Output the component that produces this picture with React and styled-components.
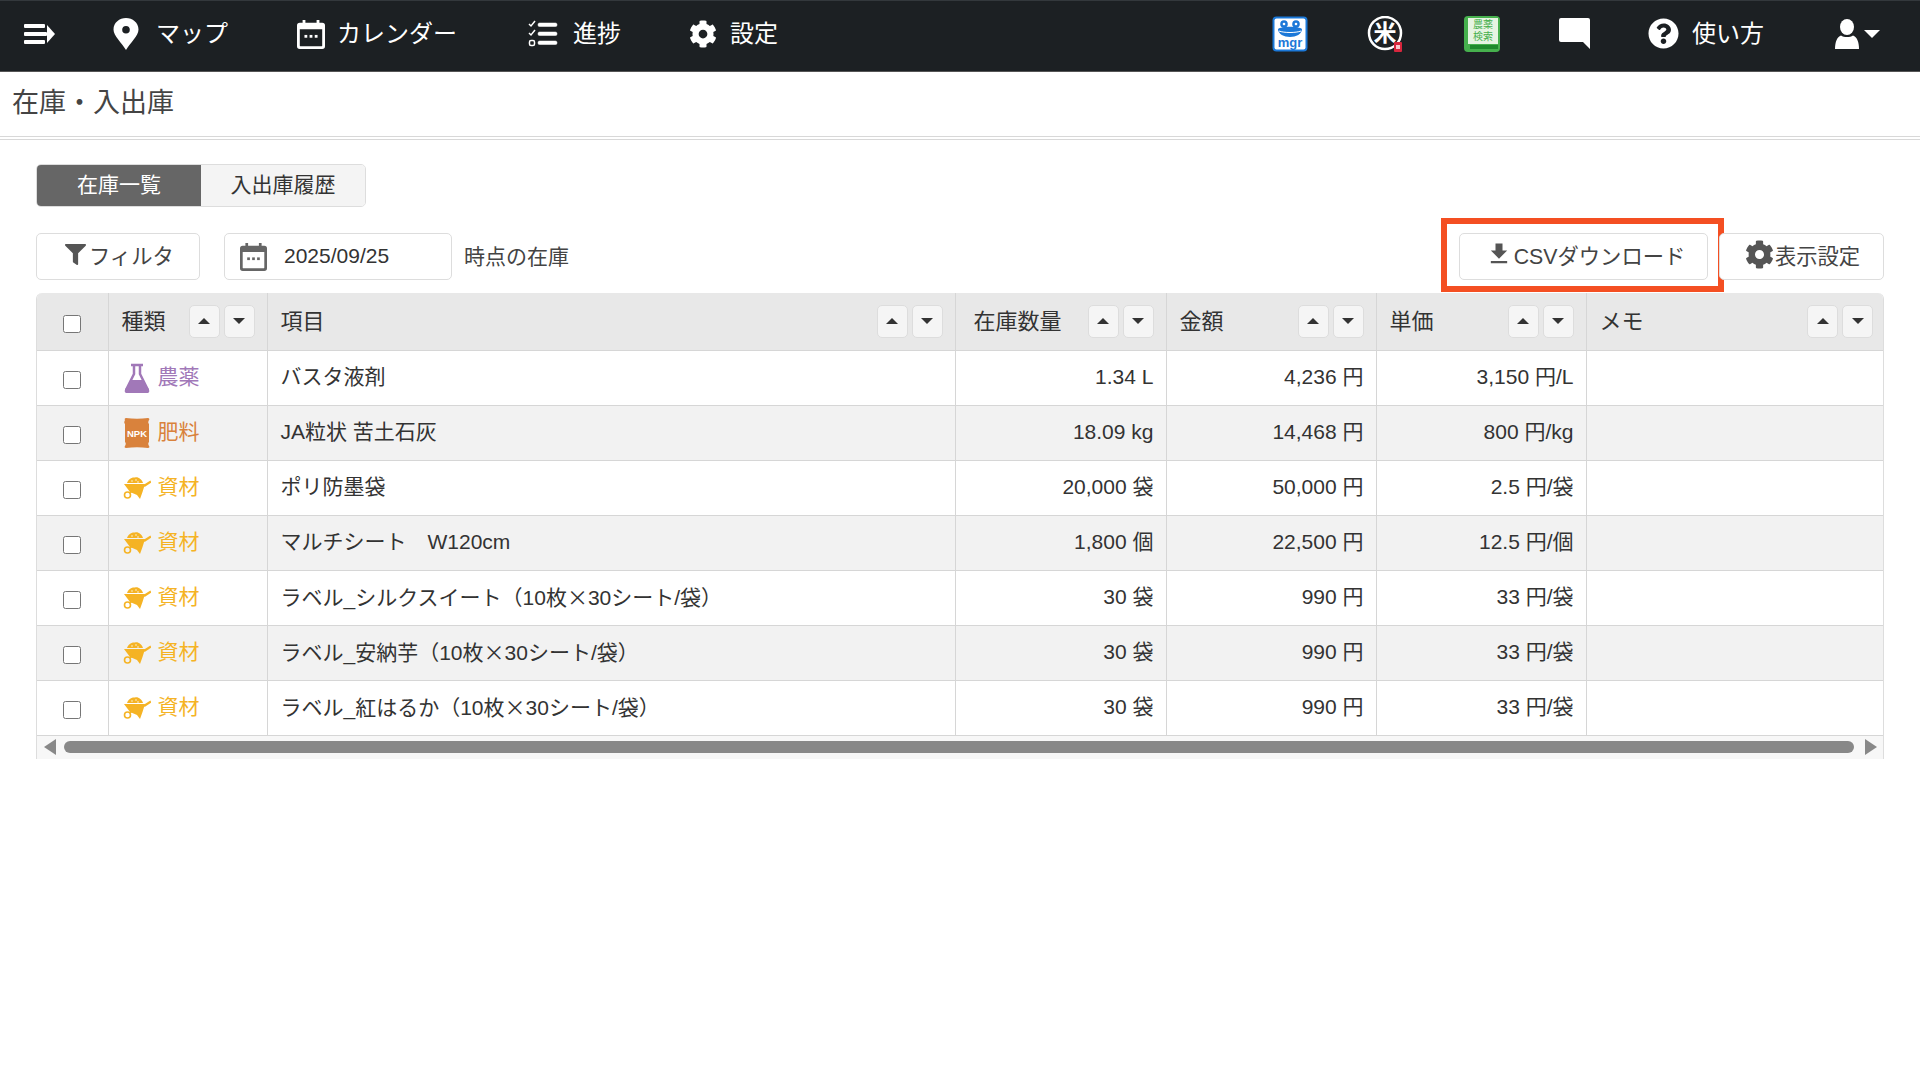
import React from 'react'
import styled, { createGlobalStyle } from 'styled-components'
import { FaCog, FaQuestionCircle, FaFilter } from 'react-icons/fa'
import { MdFileDownload } from 'react-icons/md'

const GlobalStyle = createGlobalStyle`
  html, body { margin: 0; padding: 0; background: #fff; }
  body {
    font-family: "Liberation Sans", "Noto Sans CJK JP", sans-serif;
    font-size: 21px;
    color: #333;
  }
`

const Nav = styled.header`
  height: 72px;
  box-sizing: border-box;
  background: #1c2023;
  border-top: 1px solid #33383c;
  border-bottom: 1px solid #555;
  padding: 0 40px 5px 22px;
  display: flex;
  align-items: center;
  color: #fff;
`
const MenuButton = styled.div`
  display: flex;
  margin-right: 55px;
`
const NavItem = styled.div`
  display: flex;
  align-items: center;
  gap: ${(p) => p.$gap || 13}px;
  margin-right: ${(p) => p.$after || 69}px;
  font-size: 24px;
  line-height: 1;
  white-space: nowrap;
  svg { flex: none; }
`
const NavRight = styled.div`
  margin-left: auto;
  display: flex;
  align-items: center;
  gap: 59px;
`
const NavHelp = styled(NavItem)`
  margin-left: -1px;
  margin-right: 12px;
`
const UserMenu = styled.div`
  display: flex;
  align-items: center;
  gap: 5px;
`
const Caret = styled.span`
  width: 0;
  height: 0;
  border-left: 8px solid transparent;
  border-right: 8px solid transparent;
  border-top: 8px solid #fff;
`

const TitleBar = styled.div`
  height: 68px;
  box-sizing: border-box;
  border-bottom: 4px double #d8d8d8;
  padding: 11px 12px 0;
  font-size: 27px;
  line-height: 40px;
  color: #444;
`

const Main = styled.main`
  padding: 24px 36px 0;
`
const Tabs = styled.div`
  display: inline-flex;
  vertical-align: top;
  height: 43px;
  box-sizing: border-box;
  border-radius: 5px;
  border: 1px solid #ddd;
  overflow: hidden;
`
const Tab = styled.div`
  width: 164px;
  padding-bottom: 6px;
  box-sizing: border-box;
  display: flex;
  align-items: center;
  justify-content: center;
  font-size: 21px;
  background: ${(p) => (p.$active ? '#666' : '#f4f4f4')};
  color: ${(p) => (p.$active ? '#fff' : '#333')};
`

const Toolbar = styled.div`
  display: flex;
  align-items: center;
  height: 47px;
  margin-top: 26px;
  margin-bottom: 13px;
`
const Button = styled.div`
  position: relative;
  box-sizing: border-box;
  height: 47px;
  padding-bottom: 5px;
  display: flex;
  align-items: center;
  justify-content: center;
  background: #fff;
  border: 1px solid #ddd;
  border-radius: 5px;
  color: #444;
  font-size: 21.3px;
  white-space: nowrap;
  svg { flex: none; }
`
const FilterButton = styled(Button)`
  width: 164px;
  justify-content: flex-start;
  padding-left: 28px;
  gap: 3px;
  margin-right: 24px;
`
const DateField = styled(Button)`
  width: 228px;
  justify-content: flex-start;
  padding: 0 0 1px 15px;
  gap: 17px;
  color: #333;
  font-size: 21px;
  line-height: 28px;
`
const DateNote = styled.span`
  margin-left: 12px;
  padding-bottom: 3px;
  font-size: 21px;
  color: #444;
`
const ToolbarRight = styled.div`
  margin-left: auto;
  display: flex;
  align-items: center;
  gap: 11px;
`
const CsvButton = styled(Button)`
  width: 249px;
  padding-left: 3px;
  gap: 1px;
  &::after {
    content: '';
    position: absolute;
    top: -16px;
    bottom: -13px;
    left: -19px;
    right: -17px;
    border: 6px solid #f44f22;
    pointer-events: none;
  }
`
const SettingsButton = styled(Button)`
  width: 165px;
  padding-left: 2px;
  gap: 1px;
`

const TableFrame = styled.div`
  border-left: 1px solid #ddd;
  border-right: 1px solid #ddd;
  border-radius: 6px 6px 0 0;
  overflow: hidden;
`
const Table = styled.table`
  width: 100%;
  table-layout: fixed;
  border-collapse: collapse;
  color: #333;
`
const HeadRow = styled.tr`
  height: 57px;
  background: #e8e8e8;
`
const Row = styled.tr`
  height: 55px;
  background: ${(p) => (p.$even ? '#f2f2f2' : '#fff')};
`
const Th = styled.th`
  padding: 0 12px 0 ${(p) => p.$indent || 13}px;
  font-weight: 400;
  font-size: 22px;
  text-align: left;
  border-left: 1px solid #d6d6d6;
  border-bottom: 1px solid #d6d6d6;
  &:first-child { border-left: 0; }
`
const Td = styled.td`
  padding: 0 ${(p) => (p.$right ? 12 : 13)}px 2px 13px;
  text-align: ${(p) => (p.$right ? 'right' : 'left')};
  border-left: 1px solid #d6d6d6;
  border-bottom: 1px solid #d6d6d6;
  white-space: nowrap;
  font-size: 21px;
  line-height: 28px;
  &:first-child { border-left: 0; }
`
const CheckCell = styled(Td)`
  padding: 2px 0 0;
  text-align: center;
`
const CheckHead = styled(Th)`
  padding: 4px 0 0;
  text-align: center;
`
const Check = styled.input.attrs({ type: 'checkbox' })`
  width: 18px;
  height: 18px;
  margin: 0;
  vertical-align: middle;
`
const HeadInner = styled.div`
  display: flex;
  align-items: center;
  justify-content: space-between;
`
const HeadLabel = styled.span`
  padding-bottom: 5px;
`
const SortGroup = styled.div`
  display: flex;
  gap: 4px;
`
const SortButton = styled.div`
  width: 31px;
  height: 33px;
  box-sizing: border-box;
  background: #f5f5f5;
  border: 1px solid #ddd;
  border-radius: 5px;
  display: flex;
  align-items: center;
  justify-content: center;
  &::before {
    content: '';
    border-left: 6px solid transparent;
    border-right: 6px solid transparent;
    ${(p) => (p.$up ? 'border-bottom: 6px solid #333;' : 'border-top: 6px solid #333;')}
  }
`
const KindLabel = styled.div`
  display: flex;
  align-items: center;
  gap: 6px;
  color: ${(p) => p.$color};
`
const KindIcon = styled.span`
  flex: none;
  width: 30px;
  margin-top: 2px;
  display: flex;
  justify-content: center;
`
const WideTimes = styled.span`
  font-family: "Noto Sans CJK JP", sans-serif;
`

const ScrollTrack = styled.div`
  height: 23px;
  background: #f7f7f7;
  display: flex;
  align-items: center;
  padding: 0 6px 0 7px;
`
const Arrow = styled.span`
  flex: none;
  width: 0;
  height: 0;
  border-top: 8px solid transparent;
  border-bottom: 8px solid transparent;
  ${(p) => (p.$left ? 'border-right: 12px solid #888;' : 'border-left: 12px solid #888;')}
`
const Thumb = styled.div`
  flex: 1;
  height: 12px;
  margin: 0 11px 0 8px;
  border-radius: 6px;
  background: #888;
`

const IconText = styled.text`
  font-family: "Liberation Sans", "Noto Sans CJK JP", sans-serif;
`

function MenuIcon() {
  return (
    <svg width="34" height="26" viewBox="0 0 34 26" fill="#fff">
      <rect x="2" y="3" width="21" height="4" rx="1" />
      <rect x="2" y="11" width="23" height="4" rx="1" />
      <rect x="2" y="19" width="21" height="4" rx="1" />
      <path d="M25 4 33 13l-8 9z" />
    </svg>
  )
}
function PinIcon() {
  return (
    <svg width="30" height="34" viewBox="0 0 30 34" fill="#fff">
      <path fillRule="evenodd" d="M15 1C8.500 1 2.500 5.700 2.500 12.500 2.500 19 11 26 15 33c4-7 12.500-14 12.500-20.500C27.500 5.700 21.500 1 15 1zm0 8a3.800 3.800 0 1 1 0 7.600 3.800 3.800 0 0 1 0-7.600z" />
    </svg>
  )
}
function CalendarIcon({ color = '#fff', size = 28 }) {
  return (
    <svg width={size} height={size + 2} viewBox="0 0 30 32" fill={color}>
      <path fillRule="evenodd" d="M6 1h3v3h12V1h3v3h3a3 3 0 0 1 3 3v22a3 3 0 0 1-3 3H3a3 3 0 0 1-3-3V7a3 3 0 0 1 3-3h3zM3 11v17.500c0 .3.2.5.5.5h23c.3 0 .5-.2.5-.5V11z" />
      <rect x="8" y="17" width="3" height="3" />
      <rect x="13.500" y="17" width="3" height="3" />
      <rect x="19" y="17" width="3" height="3" />
    </svg>
  )
}
function TasksIcon() {
  return (
    <svg width="30" height="28" viewBox="0 0 30 28" fill="#fff" stroke="#fff">
      <path d="M1 4l2 2 4-5M1 13l2 2 4-5" fill="none" strokeWidth="1.500" />
      <rect x="1.500" y="20.500" width="5" height="5" rx="1.500" fill="none" strokeWidth="1.500" />
      <rect x="10" y="3" width="19" height="3.500" rx="1.500" strokeWidth="0.500" />
      <rect x="10" y="12" width="19" height="3.500" rx="1.500" strokeWidth="0.500" />
      <rect x="10" y="21" width="19" height="3.500" rx="1.500" strokeWidth="0.500" />
    </svg>
  )
}
function MgrIcon() {
  return (
    <svg width="36" height="36" viewBox="0 0 36 36">
      <rect x="0.500" y="0.500" width="35" height="35" rx="4" fill="#1b78d8" />
      <rect x="2.500" y="2.500" width="31" height="31" rx="2" fill="#fff" />
      <circle cx="12" cy="8" r="3.800" fill="#1b78d8" />
      <circle cx="24" cy="8" r="3.800" fill="#1b78d8" />
      <circle cx="12" cy="8" r="1.300" fill="#fff" />
      <circle cx="24" cy="8" r="1.300" fill="#fff" />
      <path d="M6 13c3-3 21-3 24 0 0 5-6 8-12 8S6 18 6 13z" fill="#1b78d8" />
      <path d="M7 15c5 2 17 2 22 0" stroke="#fff" fill="none" />
      <IconText x="18" y="31" fontSize="13" textAnchor="middle" fill="#1b78d8" fontWeight="700">mgr</IconText>
    </svg>
  )
}
function RiceIcon() {
  return (
    <svg width="38" height="36" viewBox="0 0 38 36">
      <circle cx="18" cy="17" r="16" fill="none" stroke="#fff" strokeWidth="2.500" />
      <IconText x="18" y="25" fontSize="23" fontWeight="700" textAnchor="middle" fill="#fff">米</IconText>
      <rect x="27" y="26" width="8" height="10" rx="1" fill="#d7263d" />
      <rect x="29" y="29" width="4" height="4" fill="#f6c7cd" />
    </svg>
  )
}
function BookIcon() {
  return (
    <svg width="36" height="36" viewBox="0 0 36 36">
      <rect width="36" height="36" rx="4" fill="#46b04d" />
      <rect x="4" y="2" width="30" height="26" fill="#e6f4e2" />
      <IconText x="19" y="12" fontSize="10" textAnchor="middle" fill="#46b04d">農薬</IconText>
      <IconText x="19" y="24" fontSize="10" textAnchor="middle" fill="#46b04d">検索</IconText>
      <rect x="6" y="29" width="28" height="4" fill="#1f8a2d" />
    </svg>
  )
}
function CommentIcon() {
  return (
    <svg width="31" height="31" viewBox="0 0 31 31" fill="#fff">
      <path d="M2 0h27a2 2 0 0 1 2 2v29l-7-7H2a2 2 0 0 1-2-2V2a2 2 0 0 1 2-2z" />
    </svg>
  )
}
function UserIcon() {
  return (
    <svg width="24" height="30" viewBox="0 0 24 30" fill="#fff">
      <ellipse cx="12" cy="8" rx="7" ry="8" />
      <path d="M0 30c0-7 2-12 6-13.500 3 2 9 2 12 0 4 1.500 6 6.500 6 13.500z" />
    </svg>
  )
}
function FlaskIcon() {
  return (
    <svg width="26" height="30" viewBox="0 0 26 30">
      <path d="M7 2h12M10 2v9L2.500 26a2 2 0 0 0 2 3h17a2 2 0 0 0 2-3L16 11V2" fill="none" stroke="#a178b8" strokeWidth="2.500" />
      <path d="M7 17h12l6 10a2 2 0 0 1-2 3H3a2 2 0 0 1-2-3z" fill="#a178b8" />
    </svg>
  )
}
function BagIcon() {
  return (
    <svg width="26" height="30" viewBox="0 0 26 30">
      <path d="M2 0c7 1 15 1 22 0 1 0 2 1 1 2-1 2-1 3 0 4v18c-1 1-1 2 0 4 1 1 0 2-1 2-7-1-15-1-22 0-1 0-2-1-1-2 1-2 1-3 0-4V6c-1-1-1-2 0-4-1-1 0-2 1-2z" fill="#d9823c" />
      <IconText x="13" y="19" fontSize="9.500" fontWeight="700" textAnchor="middle" fill="#fff">NPK</IconText>
    </svg>
  )
}
function BarrowIcon() {
  return (
    <svg width="28" height="22" viewBox="0 0 28 22" fill="#f5b324">
      <path d="M4 6c1-3 4-6 8-5.500 3-1 7 2 8 5.500z" />
      <path d="M1 7h21l-2.500 8-2.500 7-3-4-7-3z" />
      <path d="M21 9l7-4.500" stroke="#f5b324" strokeWidth="2.200" fill="none" />
      <circle cx="4.500" cy="18" r="3" fill="none" stroke="#f5b324" strokeWidth="1.600" />
      <path d="M6.500 16l3.500-2.500" stroke="#f5b324" strokeWidth="1.600" />
      <circle cx="9" cy="4" r="0.700" fill="#fff" />
      <circle cx="13" cy="3" r="0.700" fill="#fff" />
      <circle cx="15" cy="5" r="0.700" fill="#fff" />
    </svg>
  )
}

const kinds = {
  pesticide: { label: '農薬', color: '#a178b8', icon: <FlaskIcon /> },
  fertilizer: { label: '肥料', color: '#d9823c', icon: <BagIcon /> },
  material: { label: '資材', color: '#f5b324', icon: <BarrowIcon /> },
}

const Times = <WideTimes>×</WideTimes>

const rows = [
  ['pesticide', 'バスタ液剤', '1.34 L', '4,236 円', '3,150 円/L'],
  ['fertilizer', 'JA粒状 苦土石灰', '18.09 kg', '14,468 円', '800 円/kg'],
  ['material', 'ポリ防墨袋', '20,000 袋', '50,000 円', '2.5 円/袋'],
  ['material', 'マルチシート　W120cm', '1,800 個', '22,500 円', '12.5 円/個'],
  ['material', <>ラベル_シルクスイート（10枚{Times}30シート/袋）</>, '30 袋', '990 円', '33 円/袋'],
  ['material', <>ラベル_安納芋（10枚{Times}30シート/袋）</>, '30 袋', '990 円', '33 円/袋'],
  ['material', <>ラベル_紅はるか（10枚{Times}30シート/袋）</>, '30 袋', '990 円', '33 円/袋'],
]

const columns = [
  { label: '種類', width: 159 },
  { label: '項目', width: 688 },
  { label: '在庫数量', width: 211, indent: 18 },
  { label: '金額', width: 210 },
  { label: '単価', width: 210 },
  { label: 'メモ', width: 299 },
]

export default function App() {
  return (
    <>
      <GlobalStyle />
      <Nav>
        <MenuButton><MenuIcon /></MenuButton>
        <NavItem $gap={15}><PinIcon />マップ</NavItem>
        <NavItem $gap={12} $after={71}><CalendarIcon />カレンダー</NavItem>
        <NavItem $gap={15} $after={68}><TasksIcon />進捗</NavItem>
        <NavItem><FaCog size={28} />設定</NavItem>
        <NavRight>
          <MgrIcon />
          <RiceIcon />
          <BookIcon />
          <CommentIcon />
          <NavHelp><FaQuestionCircle size={31} />使い方</NavHelp>
          <UserMenu><UserIcon /><Caret /></UserMenu>
        </NavRight>
      </Nav>
      <TitleBar>在庫・入出庫</TitleBar>
      <Main>
        <Tabs>
          <Tab $active>在庫一覧</Tab>
          <Tab>入出庫履歴</Tab>
        </Tabs>
        <Toolbar>
          <FilterButton><FaFilter size={21} color="#555" />フィルタ</FilterButton>
          <DateField><CalendarIcon color="#666" size={27} />2025/09/25</DateField>
          <DateNote>時点の在庫</DateNote>
          <ToolbarRight>
            <CsvButton><MdFileDownload size={28} color="#555" />CSVダウンロード</CsvButton>
            <SettingsButton><FaCog size={29} color="#555" />表示設定</SettingsButton>
          </ToolbarRight>
        </Toolbar>
        <TableFrame>
          <Table>
            <colgroup>
              <col style={{ width: 71 }} />
              {columns.map((c) => <col key={c.label} style={{ width: c.width }} />)}
            </colgroup>
            <thead>
              <HeadRow>
                <CheckHead><Check /></CheckHead>
                {columns.map((c) => (
                  <Th key={c.label} $indent={c.indent}>
                    <HeadInner>
                      <HeadLabel>{c.label}</HeadLabel>
                      <SortGroup>
                        <SortButton $up />
                        <SortButton />
                      </SortGroup>
                    </HeadInner>
                  </Th>
                ))}
              </HeadRow>
            </thead>
            <tbody>
              {rows.map((r, i) => {
                const kind = kinds[r[0]]
                return (
                  <Row key={i} $even={i % 2 === 1}>
                    <CheckCell><Check /></CheckCell>
                    <Td>
                      <KindLabel $color={kind.color}>
                        <KindIcon>{kind.icon}</KindIcon>
                        {kind.label}
                      </KindLabel>
                    </Td>
                    <Td>{r[1]}</Td>
                    <Td $right>{r[2]}</Td>
                    <Td $right>{r[3]}</Td>
                    <Td $right>{r[4]}</Td>
                    <Td />
                  </Row>
                )
              })}
            </tbody>
          </Table>
          <ScrollTrack>
            <Arrow $left />
            <Thumb />
            <Arrow />
          </ScrollTrack>
        </TableFrame>
      </Main>
    </>
  )
}
